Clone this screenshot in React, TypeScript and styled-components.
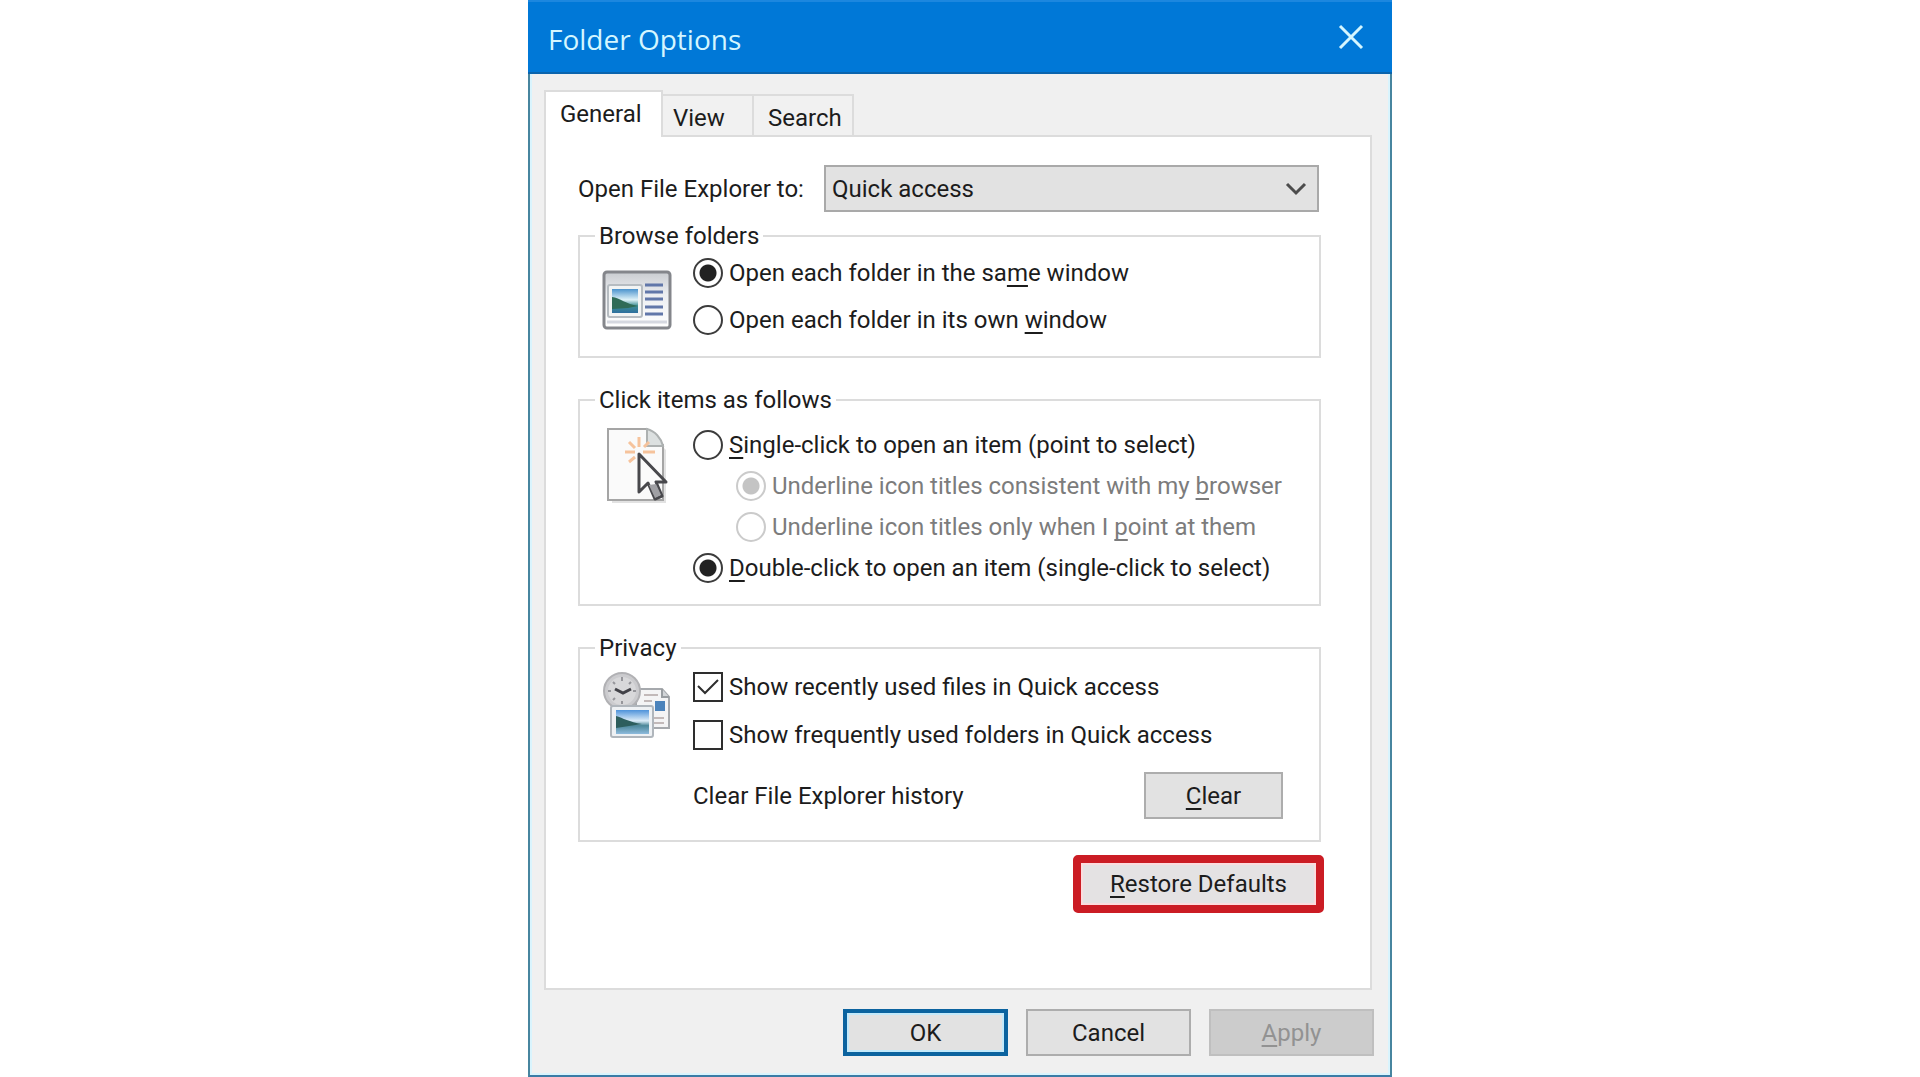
import React, { useState } from "react";
import styled, { createGlobalStyle, css } from "styled-components";

const GlobalStyle = createGlobalStyle`
  * { box-sizing: border-box; }
  body {
    margin: 0;
    background: #ffffff;
    color: #1c1c1c;
    font-family: Roboto, "Liberation Sans", sans-serif;
    font-size: 24px;
    line-height: 28px;
  }
  button, select, input { font: inherit; color: inherit; margin: 0; }
`;

const Dialog = styled.main`
  display: flex;
  flex-direction: column;
  width: 45%;
  min-width: 820px;
  min-height: 100vh;
  margin: 0 auto;
  background: #f0f0f0;
  border: 2px solid #47859f;
  border-bottom-color: #3a7ca6;
  border-top: 0;
  box-shadow: inset 0 0 0 2px #d9f4fd;
`;

const TitleBar = styled.header`
  display: flex;
  align-items: center;
  justify-content: space-between;
  height: 74px;
  margin: 0 -2px;
  padding: 0 28px 0 20px;
  background: #0078d7;
  border-top: 2px solid #1c87df;
  border-bottom: 2px solid #0a64ad;
`;

const Title = styled.h1`
  margin: 4px 0 0;
  font-family: "Open Sans", "Noto Sans", sans-serif;
  font-size: 28px;
  line-height: 32px;
  font-weight: 400;
  color: #d4f6ff;
`;

const CloseButton = styled.button`
  display: flex;
  padding: 0;
  border: 0;
  background: none;
  color: #d4f6ff;
`;

const Content = styled.div`
  display: flex;
  flex-direction: column;
  flex: 1;
  padding: 16px 16px 19px 14px;
`;

const TabStrip = styled.div`
  display: flex;
  align-items: flex-end;
`;

const Tab = styled.button<{ $active?: boolean; $width: number; $inset: number }>`
  width: ${(p) => p.$width}px;
  height: 41px;
  padding: 4px 0 0 ${(p) => p.$inset}px;
  text-align: left;
  background: #f1f1f1;
  border: 2px solid #dcdcdc;
  border-left: 0;
  border-bottom: 0;
  ${(p) =>
    p.$active &&
    css`
      position: relative;
      height: 47px;
      margin-bottom: -2px;
      padding-top: 0;
      padding-bottom: 2px;
      background: #ffffff;
      border-left: 2px solid #dcdcdc;
    `}
`;

const Panel = styled.section`
  display: flex;
  flex-direction: column;
  flex: 1;
  margin-right: 2px;
  padding: 28px 49px 28px 32px;
  background: #ffffff;
  border: 2px solid #dcdcdc;
`;

const TargetRow = styled.div`
  display: flex;
  align-items: center;
  justify-content: space-between;
  gap: 12px;
  padding-right: 2px;
  white-space: nowrap;
`;

const SelectWrap = styled.div`
  position: relative;
  flex: 0 1 495px;
`;

const Select = styled.select`
  display: block;
  width: 100%;
  height: 47px;
  padding: 0 40px 0 6px;
  appearance: none;
  background: #e2e2e2;
  border: 2px solid #a9a9a9;
  border-radius: 0;
`;

const Chevron = styled.svg`
  position: absolute;
  top: 17px;
  right: 12px;
  pointer-events: none;
`;

const Group = styled.fieldset`
  min-width: 0;
  margin: 0;
  padding: 0 36px 21px 15px;
  border: 2px solid #dcdcdc;
  & + & { margin-top: 28px; }
  ${TargetRow} + & { margin-top: 10px; }
`;

const Legend = styled.legend`
  padding: 0 4px;
`;

const GroupBody = styled.div<{ $top: number }>`
  display: flex;
  gap: 21px;
  padding: ${(p) => p.$top}px 0 0 7px;
`;

const Picture = styled.svg`
  flex: none;
  width: 70px;
  height: 76px;
  overflow: visible;
`;

const Options = styled.div<{ $gap: number }>`
  display: flex;
  flex: 1;
  flex-direction: column;
  gap: ${(p) => p.$gap}px;
`;

const Option = styled.label<{ $nested?: boolean }>`
  display: flex;
  align-items: center;
  gap: 6px;
  height: 30px;
  white-space: nowrap;
  margin-left: ${(p) => (p.$nested ? 43 : 0)}px;
  &:has(:disabled) { color: #7c7c7c; }
`;

const Radio = styled.input`
  flex: none;
  width: 30px;
  height: 30px;
  appearance: none;
  border: 2px solid #3c3c3c;
  border-radius: 50%;
  background: #ffffff;
  &:checked { background: radial-gradient(circle, #222222 8px, #ffffff 9px); }
  &:disabled { border-color: #cbcbcb; }
  &:disabled:checked { background: radial-gradient(circle, #c4c4c4 8px, #ffffff 9px); }
`;

const TickWrap = styled.span`
  display: grid;
  flex: none;
  width: 30px;
  height: 30px;
  & > * { grid-area: 1 / 1; }
  svg { pointer-events: none; }
`;

const Tick = styled.input`
  width: 30px;
  height: 30px;
  appearance: none;
  border: 2px solid #2e2e2e;
  background: #ffffff;
`;

const Key = styled.u`
  text-decoration-thickness: 2px;
  text-underline-offset: 4px;
  text-decoration-skip-ink: none;
`;

const HistoryRow = styled.div`
  display: flex;
  align-items: center;
  justify-content: space-between;
  margin-top: 4px;
`;

const Button = styled.button<{ $width: number; $primary?: boolean }>`
  width: ${(p) => p.$width}px;
  height: 47px;
  padding: 0;
  background: #e2e2e2;
  border: 2px solid #adadad;
  ${(p) =>
    p.$primary &&
    css`
      border: 4px solid #0b639f;
      box-shadow: inset 0 0 0 2px #c3e9fa;
    `}
  &:disabled { background: #cccccc; border-color: #bfbfbf; color: #929292; }
`;

const RestoreButton = styled.button`
  align-self: flex-end;
  width: 251px;
  height: 58px;
  margin: 13px -3px 0 0;
  padding: 0;
  background: #e4e2e3;
  border: 8px solid #cb1c24;
  border-radius: 5px;
  box-shadow: inset 0 0 0 2px #fbdcde;
`;

const Footer = styled.footer`
  display: flex;
  justify-content: flex-end;
  gap: 18px;
  padding-top: 19px;
`;

const WindowPicture = () => (
  <Picture viewBox="0 0 70 76" aria-hidden="true">
    <defs>
      <linearGradient id="frame" x1="0" y1="0" x2="0" y2="1">
        <stop offset="0" stopColor="#c9ccd0" />
        <stop offset="0.4" stopColor="#eceef1" />
        <stop offset="1" stopColor="#ffffff" />
      </linearGradient>
      <linearGradient id="scene" x1="0" y1="0" x2="0" y2="1">
        <stop offset="0" stopColor="#4b93cd" />
        <stop offset="0.45" stopColor="#dff2f8" />
        <stop offset="0.7" stopColor="#3c8d92" />
        <stop offset="1" stopColor="#2d6f9f" />
      </linearGradient>
    </defs>
    <rect x="2" y="14" width="66" height="56" rx="3" fill="url(#frame)" stroke="#84868b" strokeWidth="3" />
    <path d="M5 64H65" stroke="#d5d8e0" strokeWidth="3" />
    <rect x="6" y="27" width="34" height="32" rx="2" fill="#f2f4f4" stroke="#b6bcc1" strokeWidth="2" />
    <rect x="10" y="31" width="26" height="24" fill="url(#scene)" />
    <path d="M10 39C18 40 24 46 36 48L26 50L10 51Z" fill="#2f6b56" />
    <path d="M43 27H61M43 34H61M43 41H61M43 49H61M43 56H61" stroke="#6177a9" strokeWidth="3" />
  </Picture>
);

const ClickPicture = () => (
  <Picture viewBox="0 0 70 76" aria-hidden="true">
    <path d="M8 1H45L62 18V71H8Z" fill="#c6c6c6" opacity="0.5" transform="translate(2 2)" />
    <path d="M6 -1H45L61 15V70H6Z" fill="#fafafa" stroke="#a5a5a5" strokeWidth="2" />
    <path d="M45 -1V16H61C59 8 53 1 45 -1Z" fill="#dce0e0" stroke="#adb1b1" strokeWidth="2" />
    <path d="M37 7V17M23 22H33M41 22H53M27 12L33 18M47 12L42 17M27 32L33 27" stroke="#f6c39c" strokeWidth="3" />
    <path d="M37 24V62L46 53L53 69L60 66L54 52H64Z" fill="#fbfbfb" stroke="#48484c" strokeWidth="3" strokeLinejoin="round" />
    <path d="M47 55L53 68L59 65L54 54Z" fill="#a0a0a4" />
  </Picture>
);

const HistoryPicture = () => (
  <Picture viewBox="0 0 70 76" aria-hidden="true">
    <defs>
      <linearGradient id="lake" x1="0" y1="0" x2="0" y2="1">
        <stop offset="0" stopColor="#4d92da" />
        <stop offset="0.45" stopColor="#dcecf7" />
        <stop offset="0.65" stopColor="#4c8799" />
        <stop offset="1" stopColor="#8ebbdd" />
      </linearGradient>
    </defs>
    <path d="M34 17H60L67 25V56H34Z" fill="#f4f4f5" stroke="#a6a9ad" strokeWidth="2" />
    <path d="M60 17V25H67" fill="#d2d5d8" stroke="#999da1" strokeWidth="2" />
    <path d="M42 23H56M42 29H50M42 35H50M50 46H62M50 51H62" stroke="#c2b9b9" strokeWidth="2" />
    <rect x="53" y="29" width="10" height="10" fill="#4c83bb" />
    <circle cx="20" cy="19" r="18" fill="#cbcbce" stroke="#b1b1b4" strokeWidth="2" />
    <circle cx="20" cy="19" r="14" fill="#d8d8da" />
    <path d="M20 5V9M20 29V32M6 19H9M31 19H34M11 10L13 12M29 10L27 12M11 28L13 26" stroke="#96969b" strokeWidth="2" />
    <path d="M13 17L21 21L29 17" fill="none" stroke="#414147" strokeWidth="3" />
    <rect x="9" y="34" width="42" height="31" rx="2" fill="#eef1f4" stroke="#b0b6bc" strokeWidth="2" />
    <rect x="14" y="38" width="33" height="24" fill="url(#lake)" />
    <path d="M14 44C21 46 27 50 40 52L14 56Z" fill="#2d5e5d" />
  </Picture>
);

export default function App() {
  const [openMode, setOpenMode] = useState("same");
  const [clickMode, setClickMode] = useState("double");
  const [recent, setRecent] = useState(true);
  const [frequent, setFrequent] = useState(false);

  return (
    <>
      <GlobalStyle />
      <Dialog>
        <TitleBar>
          <Title>Folder Options</Title>
          <CloseButton type="button" aria-label="Close">
            <svg width="26" height="26" viewBox="0 0 26 26" aria-hidden="true">
              <path d="M2 2L24 24M24 2L2 24" stroke="currentColor" strokeWidth="3" />
            </svg>
          </CloseButton>
        </TitleBar>
        <Content>
          <TabStrip role="tablist">
            <Tab type="button" role="tab" aria-selected="true" $active $width={119} $inset={14}>General</Tab>
            <Tab type="button" role="tab" aria-selected="false" $width={91} $inset={10}>View</Tab>
            <Tab type="button" role="tab" aria-selected="false" $width={100} $inset={14}>Search</Tab>
          </TabStrip>
          <Panel>
            <TargetRow>
              <label htmlFor="target">Open File Explorer to:</label>
              <SelectWrap>
                <Select id="target" defaultValue="quick">
                  <option value="quick">Quick access</option>
                  <option value="pc">This PC</option>
                </Select>
                <Chevron width="22" height="14" viewBox="0 0 22 14" aria-hidden="true">
                  <path d="M2 2L11 11L20 2" fill="none" stroke="#4c4c4c" strokeWidth="3" />
                </Chevron>
              </SelectWrap>
            </TargetRow>

            <Group>
              <Legend>Browse folders</Legend>
              <GroupBody $top={8}>
                <WindowPicture />
                <Options $gap={17}>
                  <Option>
                    <Radio type="radio" name="open" checked={openMode === "same"} onChange={() => setOpenMode("same")} />
                    <span>Open each folder in the sa<Key>m</Key>e window</span>
                  </Option>
                  <Option>
                    <Radio type="radio" name="open" checked={openMode === "own"} onChange={() => setOpenMode("own")} />
                    <span>Open each folder in its own <Key>w</Key>indow</span>
                  </Option>
                </Options>
              </GroupBody>
            </Group>

            <Group>
              <Legend>Click items as follows</Legend>
              <GroupBody $top={16}>
                <ClickPicture />
                <Options $gap={11}>
                  <Option>
                    <Radio type="radio" name="click" checked={clickMode === "single"} onChange={() => setClickMode("single")} />
                    <span><Key>S</Key>ingle-click to open an item (point to select)</span>
                  </Option>
                  <Option $nested>
                    <Radio type="radio" name="underline" defaultChecked disabled={clickMode !== "single"} />
                    <span>Underline icon titles consistent with my <Key>b</Key>rowser</span>
                  </Option>
                  <Option $nested>
                    <Radio type="radio" name="underline" disabled={clickMode !== "single"} />
                    <span>Underline icon titles only when I <Key>p</Key>oint at them</span>
                  </Option>
                  <Option>
                    <Radio type="radio" name="click" checked={clickMode === "double"} onChange={() => setClickMode("double")} />
                    <span><Key>D</Key>ouble-click to open an item (single-click to select)</span>
                  </Option>
                </Options>
              </GroupBody>
            </Group>

            <Group>
              <Legend>Privacy</Legend>
              <GroupBody $top={10}>
                <HistoryPicture />
                <Options $gap={18}>
                  <Option>
                    <TickWrap>
                      <Tick type="checkbox" checked={recent} onChange={(e) => setRecent(e.target.checked)} />
                      {recent && (
                        <svg width="30" height="30" viewBox="0 0 30 30" aria-hidden="true">
                          <path d="M5 14L12 21L25 8" fill="none" stroke="#2e2e2e" strokeWidth="2" />
                        </svg>
                      )}
                    </TickWrap>
                    <span>Show recently used files in Quick access</span>
                  </Option>
                  <Option>
                    <TickWrap>
                      <Tick type="checkbox" checked={frequent} onChange={(e) => setFrequent(e.target.checked)} />
                      {frequent && (
                        <svg width="30" height="30" viewBox="0 0 30 30" aria-hidden="true">
                          <path d="M5 14L12 21L25 8" fill="none" stroke="#2e2e2e" strokeWidth="2" />
                        </svg>
                      )}
                    </TickWrap>
                    <span>Show frequently used folders in Quick access</span>
                  </Option>
                  <HistoryRow>
                    <span>Clear File Explorer history</span>
                    <Button type="button" $width={139}><Key>C</Key>lear</Button>
                  </HistoryRow>
                </Options>
              </GroupBody>
            </Group>

            <RestoreButton type="button"><Key>R</Key>estore Defaults</RestoreButton>
          </Panel>
          <Footer>
            <Button type="button" $width={165} $primary>OK</Button>
            <Button type="button" $width={165}>Cancel</Button>
            <Button type="button" $width={165} disabled><Key>A</Key>pply</Button>
          </Footer>
        </Content>
      </Dialog>
    </>
  );
}
